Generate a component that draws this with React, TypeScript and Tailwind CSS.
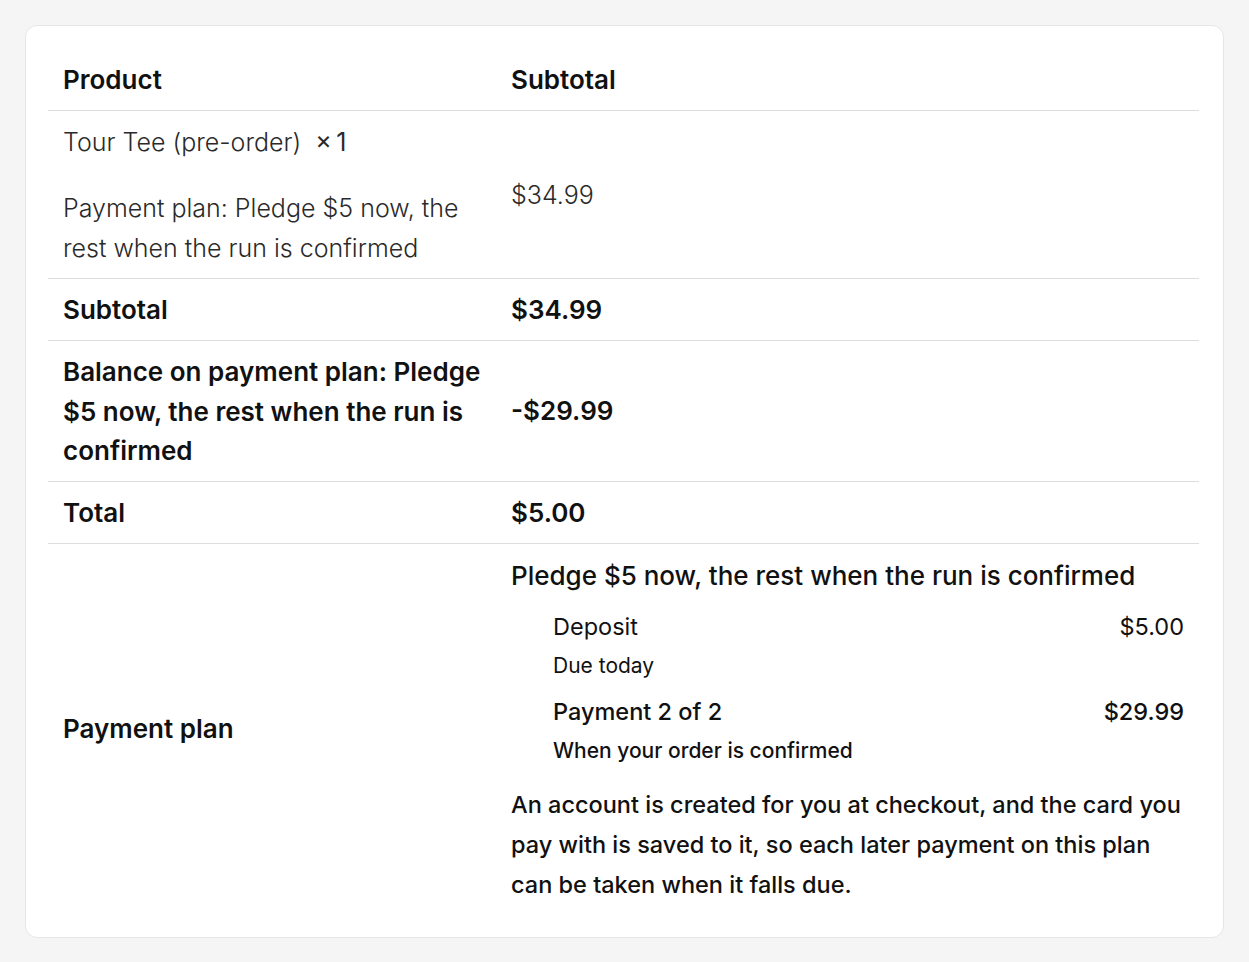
const font = { fontFamily: "Inter, 'Noto Sans', sans-serif" };

function Row({ label, children }: { label: React.ReactNode; children: React.ReactNode }) {
  return (
    <tr className="border-b border-[#dedede] align-middle">
      <th className="w-[448px] px-[15px] pt-[11px] pb-[10px] text-left font-semibold">{label}</th>
      <td className="px-[15px] pt-[11px] pb-[10px] font-semibold">{children}</td>
    </tr>
  );
}

export default function App() {
  return (
    <div className="min-h-[962px] bg-[#f5f5f5] p-[25px] text-[#111]" style={font}>
      <div className="rounded-xl border border-[#e6e6e6] bg-white pt-[23px] pr-[24px] pb-[22px] pl-[22px]">
        <table className="w-full border-collapse text-[26px] leading-[40px]">
          <thead>
            <tr className="border-b border-[#dedede]">
              <th className="w-[448px] px-[15px] pt-[11px] pb-[10px] text-left font-semibold">Product</th>
              <th className="px-[15px] pt-[11px] pb-[10px] text-left font-semibold">Subtotal</th>
            </tr>
          </thead>
          <tbody>
            <tr className="border-b border-[#dedede]">
              <td className="px-[15px] pt-[11px] pb-[10px] font-light text-[#2a2a2a]">
                <div className="text-[25px]">
                  Tour Tee (pre-order)&nbsp; <span className="font-normal">×&thinsp;1</span>
                </div>
                <div className="mt-[27px] text-[25px] leading-[39.5px]">
                  Payment plan: Pledge $5 now, the
                  <br />
                  rest when the run is confirmed
                </div>
              </td>
              <td className="px-[15px] text-[25px] font-light text-[#2a2a2a]">$34.99</td>
            </tr>
            <Row label="Subtotal">$34.99</Row>
            <Row
              label={
                <span className="block leading-[39.5px]">
                  Balance on payment plan: Pledge
                  <br />
                  $5 now, the rest when the run is
                  <br />
                  confirmed
                </span>
              }
            >
              -$29.99
            </Row>
            <Row label="Total">$5.00</Row>
            <tr>
              <th className="px-[15px] text-left font-semibold">Payment plan</th>
              <td className="px-[15px] pt-[12px] pb-[10px]">
                <div className="font-medium leading-[40px]">Pledge $5 now, the rest when the run is confirmed</div>
                <div className="mt-[11px] flex flex-col gap-[7px] pl-[42px]">
                  <div>
                    <div className="flex justify-between text-[23.5px] leading-[40px]">
                      <span>Deposit</span>
                      <span>$5.00</span>
                    </div>
                    <div className="text-[21px] leading-[38px]">Due today</div>
                  </div>
                  <div>
                    <div className="flex justify-between text-[23.5px] font-medium leading-[40px]">
                      <span>Payment 2 of 2</span>
                      <span>$29.99</span>
                    </div>
                    <div className="text-[21px] font-medium leading-[38px]">When your order is confirmed</div>
                  </div>
                </div>
                <p className="mt-[15px] text-[23.5px] font-medium leading-[40px]">
                  An account is created for you at checkout, and the card you
                  <br />
                  pay with is saved to it, so each later payment on this plan
                  <br />
                  can be taken when it falls due.
                </p>
              </td>
            </tr>
          </tbody>
        </table>
      </div>
    </div>
  );
}
